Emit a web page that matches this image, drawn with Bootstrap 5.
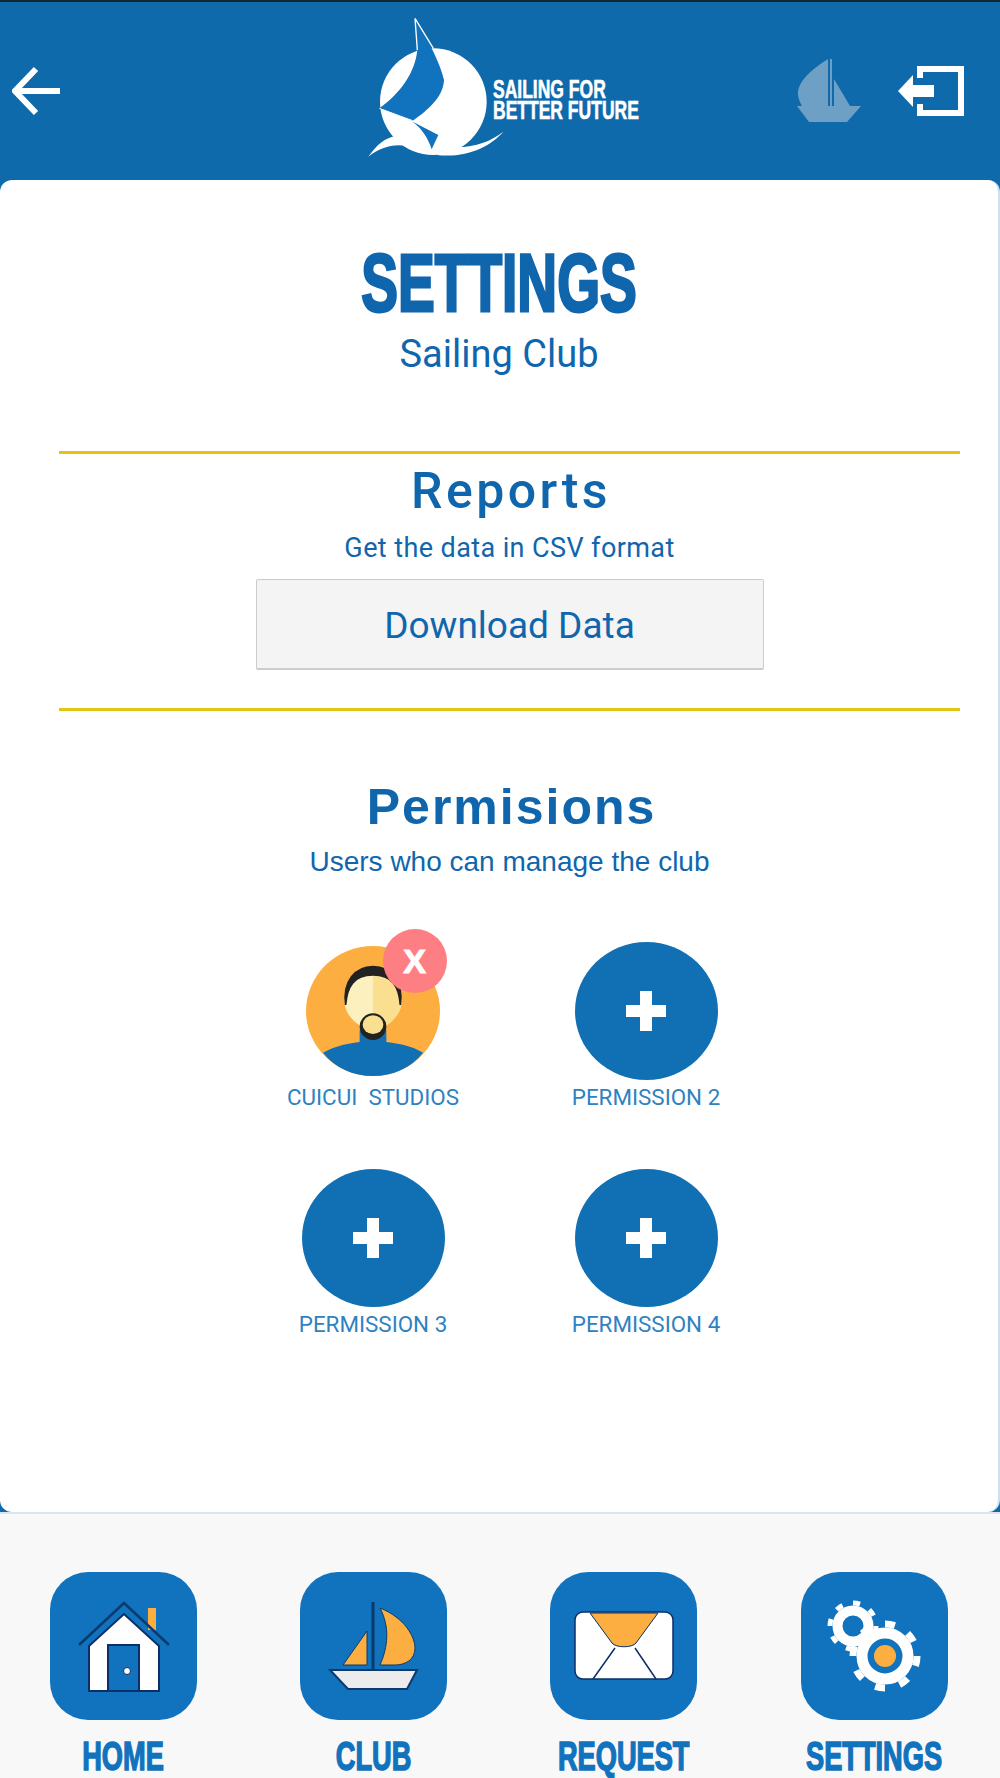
<!DOCTYPE html>
<html lang="en">
<head>
    <meta charset="UTF-8">
    <meta name="viewport" content="width=device-width, initial-scale=1.0">
    <title>Settings - Sailing Club</title>
    <link rel="stylesheet" href="https://cdn.jsdelivr.net/npm/bootstrap@5.3.0/dist/css/bootstrap.min.css">
    <style>
        body { background: #0f6aab; font-family: Roboto, "Liberation Sans", sans-serif; color: #1066ad; }
        .top-bar { height: 180px; flex: none; background: #0f6aab; border-top: 2px solid #14262f; }
        .top-bar svg { flex: none; }
        .back-btn { margin-left: 12px; }
        .logo-wrap { margin-left: 305px; margin-top: -12px; }
        .logo-wrap svg { overflow: visible; }
        .logo-text { margin-left: 3px; margin-right: -62px; margin-top: 29px; color: #fff; font: 700 25px/21px "Liberation Sans", sans-serif; -webkit-text-stroke: .6px #fff; white-space: nowrap; transform: scaleX(.7); transform-origin: left center; }
        .boat-faded { margin-left: 158px; }
        .exit-btn { margin-left: 37px; }
        .main-card { background: #fff; border-radius: 12px; border-right: 2px solid #cfe0ee; padding-top: 68px; text-align: center; }
        .page-title { font: 700 82px/70px "Liberation Sans", sans-serif; -webkit-text-stroke: 3px #1066ad; margin: 0; transform: scaleX(.672); }
        .page-sub { font-size: 38px; line-height: 44px; margin: 14px 0 75px; }
        .block-wrap { margin: 0 38px 0 59px; }
        .gold-line { height: 3px; background: #e2c412; }
        .block-title { font: 500 50px/60px Roboto, sans-serif; letter-spacing: 3.4px; padding-left: 3px; margin: 7px 0 11px; }
        .block-sub { font-size: 27px; line-height: 32px; letter-spacing: .4px; margin: 0 0 15px; }
        .download-btn { display: block; width: 508px; height: 91px; margin: 0 auto 38px; padding-top: 10px; background: #f4f4f4; border: 1px solid #ccc; border-bottom-width: 2px; border-radius: 2px; color: #1066ad; font-size: 37px; }
        .perm-title { font: 700 50px/60px "Liberation Sans", sans-serif; letter-spacing: 2px; padding-left: 4px; margin: 66px 0 9px; }
        .perm-sub { font: 400 28px/32px "Liberation Sans", sans-serif; margin: 0; }
        .perm-grid { display: grid; grid-template-columns: 273px 273px; justify-content: center; row-gap: 60px; margin-top: 64px; }
        .perm-item { display: flex; flex-direction: column; align-items: center; }
        .perm-circle { position: relative; width: 143px; height: 138px; display: flex; align-items: center; justify-content: center; }
        .perm-add { background: #116fb3; border-radius: 50%; }
        .remove-badge { position: absolute; left: 81px; top: -13px; width: 64px; height: 64px; border-radius: 50%; background: #fe7f83; color: #fff; font: 700 34px/64px "Liberation Sans", sans-serif; -webkit-text-stroke: 1px #fff; text-align: center; }
        .perm-label { font-size: 22.4px; line-height: 24px; margin-top: 5px; color: #2f82c0; white-space: pre; }
        .bottom-bar { height: 266px; flex: none; margin-left: -2px; background: #f8f8f8; border-top: 2px solid #d5e5f2; padding-top: 58px; }
        .tab-item { width: 250.33px; flex: none; display: flex; flex-direction: column; align-items: center; text-decoration: none; }
        .tab-tile { width: 147px; height: 148px; background: #1172bd; border-radius: 38px; }
        .tab-label { font: 700 40px/44px "Liberation Sans", sans-serif; -webkit-text-stroke: 1.5px #1172bd; color: #1172bd; margin-top: 14px; transform: scaleX(.68); }
    </style>
</head>
<body class="vh-100 d-flex flex-column overflow-hidden">
    <!-- Header -->
    <header class="top-bar d-flex align-items-center">
        <svg class="back-btn" width="48" height="50" viewBox="0 0 48 50"><path d="M48 25H5M24 3 3 25l21 22" fill="none" stroke="#fff" stroke-width="6"/></svg>
        <div class="logo-wrap d-flex align-items-center">
            <svg width="125" height="170" viewBox="75 0 375 510">
                <ellipse cx="280" cy="305" rx="160" ry="160" fill="#fff"/>
                <path d="M85 470C110 435 135 412 170 408l60 40C180 425 130 435 85 470Z" fill="#fff"/>
                <path d="M290 465C380 475 450 440 490 395 450 425 410 440 350 442Z" fill="#fff"/>
                <path d="M225 55 232 150C225 220 180 280 118 325L218 362C265 330 310 290 312 240 300 190 270 130 225 55Z" fill="#1172bd"/>
                <path d="M218 365 295 405 275 448C265 415 245 385 218 365Z" fill="#1172bd"/>
                <path d="M225 55 232 150M225 55 280 145" stroke="#fff" stroke-width="4" fill="none"/>
                <path d="M118 325 218 362" stroke="#fff" stroke-width="3"/>
            </svg>
            <div class="logo-text">SAILING FOR<br>BETTER FUTURE</div>
        </div>
        <svg class="boat-faded" width="64" height="64" viewBox="0 0 64 64"><path d="M31 0C12 12 0 24 1 36c1 6 3 9 4 11h26ZM37 20v27h16ZM33 0h2v47h-2ZM0 47h64L50 63H12Z" fill="#6e9fc4"/></svg>
        <svg class="exit-btn" width="66" height="50" viewBox="0 0 66 50"><path d="M22 12V3h41v44H22v-9" fill="none" stroke="#fff" stroke-width="6"/><path d="M0 25 15 9v10h21v12H15v10Z" fill="#fff"/></svg>
    </header>

    <!-- Content -->
    <main class="main-card flex-grow-1">
        <h1 class="page-title">SETTINGS</h1>
        <p class="page-sub">Sailing Club</p>
        <div class="block-wrap">
            <div class="gold-line"></div>
            <h2 class="block-title">Reports</h2>
            <p class="block-sub">Get the data in CSV format</p>
            <button type="button" class="btn download-btn">Download Data</button>
            <div class="gold-line"></div>
            <h2 class="perm-title">Permisions</h2>
            <p class="perm-sub">Users who can manage the club</p>
            <div class="perm-grid">
                <div class="perm-item">
                    <div class="perm-circle">
                        <svg width="134" height="130" viewBox="139 105 402 390">
                            <ellipse cx="340" cy="300" rx="201" ry="195" fill="#fcae41"/>
                            <path d="M190 425c40-22 80-28 110-32v-35h80v35c30 4 75 10 110 32-35 45-90 70-150 70s-115-25-150-70Z" fill="#116fb3"/>
                            <path d="M256 285c-8-80 36-118 84-118s92 38 84 118c-5 30-36 60-84 80-48-20-79-50-84-80Z" fill="#fdf0bf"/>
                            <path d="M340 167c48 0 92 38 84 118-5 30-36 60-84 80Z" fill="#f9df8f"/>
                            <path d="M258 282c-10-70 28-115 82-115s92 45 82 115c-4-55-24-90-82-90s-78 35-82 90Z" fill="#222" stroke="#222" stroke-width="5"/>
                            <circle cx="340" cy="347" r="40" fill="#222"/>
                            <ellipse cx="340" cy="341" rx="31" ry="28" fill="#f9df8f"/>
                        </svg>
                        <span class="remove-badge">X</span>
                    </div>
                    <div class="perm-label">CUICUI  STUDIOS</div>
                </div>
                <div class="perm-item">
                    <div class="perm-circle perm-add"><svg width="40" height="40" viewBox="0 0 40 40"><path d="M14 0h12v14h14v12H26v14H14V26H0V14h14Z" fill="#fff"/></svg></div>
                    <div class="perm-label">PERMISSION 2</div>
                </div>
                <div class="perm-item">
                    <div class="perm-circle perm-add"><svg width="40" height="40" viewBox="0 0 40 40"><path d="M14 0h12v14h14v12H26v14H14V26H0V14h14Z" fill="#fff"/></svg></div>
                    <div class="perm-label">PERMISSION 3</div>
                </div>
                <div class="perm-item">
                    <div class="perm-circle perm-add"><svg width="40" height="40" viewBox="0 0 40 40"><path d="M14 0h12v14h14v12H26v14H14V26H0V14h14Z" fill="#fff"/></svg></div>
                    <div class="perm-label">PERMISSION 4</div>
                </div>
            </div>
        </div>
    </main>

    <!-- Tabs -->
    <footer class="bottom-bar d-flex">
        <a class="tab-item" href="#">
            <svg class="tab-tile" viewBox="0 0 147 148">
                <path d="M98 36h8v22h-8Z" fill="#fcae41"/>
                <path d="M39 74 74 42l35 32v45H39Z" fill="#fff" stroke="#0b2f66" stroke-width="2"/>
                <path d="M58 73h31v46H58Z" fill="#1172bd" stroke="#0b2f66" stroke-width="2"/>
                <circle cx="77" cy="99" r="3.5" fill="#fff" stroke="#0b2f66"/>
                <path d="M29 73 74 31l45 42" fill="none" stroke="#0b3a6e" stroke-width="2.5"/>
            </svg>
            <span class="tab-label">HOME</span>
        </a>
        <a class="tab-item" href="#">
            <svg class="tab-tile" viewBox="0 0 147 148">
                <path d="M73 30v68" stroke="#0b3a6e" stroke-width="3"/>
                <path d="M80 36c25 10 35 29 35 40 0 12-10 17-20 17H80c8-18 10-38 0-57Z" fill="#fcae41" stroke="#0b3a6e"/>
                <path d="M67 59v34H43Z" fill="#fcae41" stroke="#0b3a6e"/>
                <path d="M30 98h87l-10 19H48Z" fill="#ececec" stroke="#0b3a6e" stroke-width="2"/>
            </svg>
            <span class="tab-label">CLUB</span>
        </a>
        <a class="tab-item" href="#">
            <svg class="tab-tile" viewBox="0 0 147 148">
                <rect x="25" y="40" width="98" height="67" rx="8" fill="#fff" stroke="#0b2f66" stroke-width="1.5"/>
                <path d="M40 41h68L86 71c-4 5-20 5-24 0Z" fill="#fcae41" stroke="#0b2f66"/>
                <path d="M65 76 43 107M85 76l21 31" stroke="#0b2f66" stroke-width="1.5"/>
            </svg>
            <span class="tab-label">REQUEST</span>
        </a>
        <a class="tab-item" href="#">
            <svg class="tab-tile" viewBox="0 0 147 148">
                <circle cx="52" cy="54" r="15.5" fill="none" stroke="#fff" stroke-width="10"/>
                <circle cx="52" cy="54" r="23" fill="none" stroke="#fff" stroke-width="5" pathLength="80" stroke-dasharray="4 6"/>
                <circle cx="84" cy="84" r="23" fill="none" stroke="#fff" stroke-width="11"/>
                <circle cx="84" cy="84" r="32" fill="none" stroke="#fff" stroke-width="7" pathLength="80" stroke-dasharray="4 6"/>
                <circle cx="84" cy="84" r="11" fill="#fcae41"/>
            </svg>
            <span class="tab-label">SETTINGS</span>
        </a>
    </footer>
</body>
</html>
